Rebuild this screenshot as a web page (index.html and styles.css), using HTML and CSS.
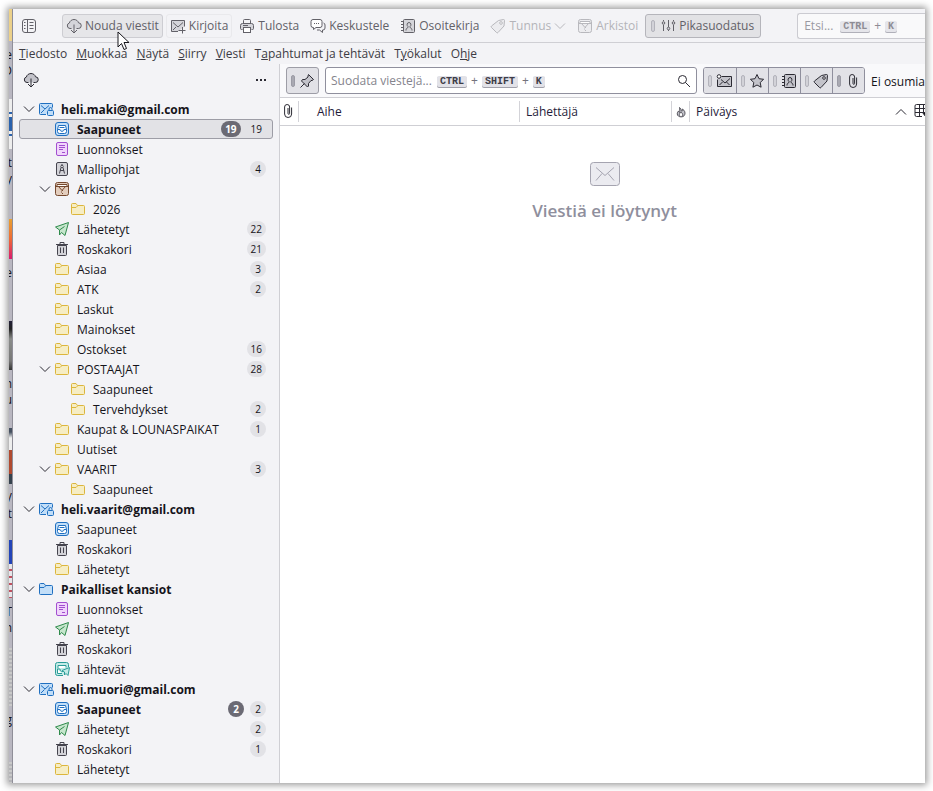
FILE: index.html
```html
<!DOCTYPE html>
<html lang="fi">
<head>
  <meta charset="UTF-8" />
  <meta name="viewport" content="width=device-width, initial-scale=1.0"/>
  <title>Saapuneet</title>
  <link rel="stylesheet" href="styles.css">
</head>
<body>

  <!-- Icon set -->
  <svg class="defs" aria-hidden="true">
    <symbol id="i-chevron" viewBox="0 0 12 12"><path fill="none" d="M1 3.5l5 5 5-5"/></symbol>
    <symbol id="i-panel" viewBox="0 0 16 16"><rect x="1.500" y="1.500" width="13" height="13" rx="2.500" fill="none"/><path fill="none" d="M6.500 1.500v13M8.500 4.500h4M8.500 7.500h4M8.500 10.500h4M3 4.500h1.500M3 7.500h1.500M3 10.500h1.500"/></symbol>
    <symbol id="i-cloud" viewBox="0 0 16 16"><path d="M5.500 10.500H4a2.800 2.800 0 0 1-.6-5.500C3.800 2.800 6 1.500 8 1.500c2.200 0 4 1.300 4.500 3.300a2.800 2.800 0 0 1-.2 5.700H10.500"/><path fill="none" d="M8 6.500v8.500M5 12l3 3 3-3"/></symbol>
    <symbol id="i-write" viewBox="0 0 16 16"><path d="M8 13.500H1.500v-11h13v6"/><path fill="none" d="M3 4.500l5 4.500 5-4.500M3 12l3-3M8.500 12.500h7M12.500 9v6.500"/></symbol>
    <symbol id="i-print" viewBox="0 0 16 16"><path d="M3.500 11.500h-1a1 1 0 0 1-1-1v-3a2 2 0 0 1 2-2h9a2 2 0 0 1 2 2v3a1 1 0 0 1-1 1h-1"/><path fill="none" d="M4.500 5.500v-3a1 1 0 0 1 1-1h5a1 1 0 0 1 1 1v3M4 7.500h5"/><rect x="4.500" y="9.500" width="7" height="5" fill="#fff"/></symbol>
    <symbol id="i-chat" viewBox="0 0 16 16"><path d="M3 1.500h7a2 2 0 0 1 2 2v4a2 2 0 0 1-2 2H6l-2.500 2v-2H3a2 2 0 0 1-2-2v-4a2 2 0 0 1 2-2z" fill="#fff"/><path fill="none" d="M13.500 5a2 2 0 0 1 1.500 2v3a2 2 0 0 1-2 2h-.500v2.500L9.500 12H7M4 5.500h1M6 5.500h1M8 5.500h1"/></symbol>
    <symbol id="i-book" viewBox="0 0 16 16"><rect x="3.500" y="1.500" width="11" height="13" rx="1"/><path fill="none" d="M1 3.500h2.500M1 6.500h2.500M1 9.500h2.500M1 12.500h2.500M6 12.500c0-2 1-2.500 2-3v-1c-1.500-1-1.200-4 1-4s2.500 3 1 4v1c1 .500 2 1 2 3"/></symbol>
    <symbol id="i-tag" viewBox="0 0 16 16"><path d="M8.500 2.500l5-1a1 1 0 0 1 1 1l-.500 5.500-6 6.500a1 1 0 0 1-1.500 0L1.500 9.500a1 1 0 0 1 0-1.500z"/><circle cx="11" cy="5" r="1.300" fill="#fff"/></symbol>
    <symbol id="i-archive" viewBox="0 0 16 16"><rect x="1.500" y="1.500" width="13" height="13" rx="2"/><path d="M3 3.500h10v2H3z" fill="#fff"/><path d="M1.500 5.500h13M4.500 5.500l3.500 4 3.500-4" fill="none"/><path fill="none" d="M8 9.500h1M7 11h1M8 12.500h1"/></symbol>
    <symbol id="i-sliders" viewBox="0 0 16 16"><path fill="none" d="M3.500 7v6M8.500 2v7M13.500 7v6M3.500 2v1M13.500 2v1M8.500 12v1"/><circle cx="3.500" cy="5" r="1.300"/><circle cx="8.500" cy="10.500" r="1.300"/><circle cx="13.500" cy="5" r="1.300"/></symbol>
    <symbol id="i-pin" viewBox="0 0 16 16"><path d="M9.500 1.500l5 5-1.500 1-1 0-2.500 3 0 2.500-1 1L2.500 8l1-1.500H6L9 4V3z"/><path fill="none" d="M5.500 10.500l-4 4"/></symbol>
    <symbol id="i-search" viewBox="0 0 16 16"><circle cx="6.500" cy="6.500" r="4" fill="none"/><path fill="none" d="M9.500 9.500l4.500 4.500"/></symbol>
    <symbol id="i-unread" viewBox="0 0 16 16"><path d="M5.500 3.500h10v10h-14v-7"/><path fill="none" d="M5 6.500l4 3.500 5-4.500M3.500 12l3-3M13.500 12l-3-3"/><circle cx="3" cy="3.500" r="1.800" fill="#fff"/></symbol>
    <symbol id="i-star" viewBox="0 0 16 16"><path d="M8 1.500l2 4.200 4.600.600-3.400 3.200.900 4.700L8 12l-4.100 2.200.900-4.700L1.400 6.300 6 5.700z"/></symbol>
    <symbol id="i-clip" viewBox="0 0 16 16"><path fill="none" d="M8 5v5.500a.8.800 0 0 0 1.600 0V4a2.500 2.500 0 0 0-5 0v7a3.500 3.500 0 0 0 7 0V4.500"/></symbol>
    <symbol id="i-flame" viewBox="0 0 16 16"><path d="M6 2c3 2 2 4 3 5 1-1 1-2 1-3 3 2 4 5 3 7.500s-3 3-5 3-5-1-5-4c0-2 1-3 2-4 0 1 0 2 1 2 1-2 0-4 0-6.500z"/><path d="M6 13c-1-2 1-4 2-5 1 1 3 3 2 5" fill="#fff"/></symbol>
    <symbol id="i-columns" viewBox="0 0 16 16"><path fill="none" d="M15 7.500V3a1.500 1.500 0 0 0-1.500-1.500h-10A1.500 1.500 0 0 0 2 3v9a1.500 1.500 0 0 0 1.500 1.500H9M2 5.500h13M2 9.500h8M6.500 2v11.500M10.500 2v7"/><path d="M9.500 9.500h6l-3 4z" fill="#15141a"/></symbol>
    <symbol id="i-account" viewBox="0 0 16 16"><path d="M8 13.500H2.500a1 1 0 0 1-1-1v-9a1 1 0 0 1 1-1h11a1 1 0 0 1 1 1v3"/><path fill="none" d="M3 4.500L7 8l4-3.500M3 12l3.500-3.500M11 9.500V8a1.500 1.500 0 0 1 3 0v1.500"/><rect x="9.500" y="9.500" width="6" height="5" rx="1"/></symbol>
    <symbol id="i-inbox" viewBox="0 0 16 16"><rect x="1.500" y="1.500" width="13" height="13" rx="2.500"/><path fill="#fff" d="M3.500 8.500l1-4h7l1 4v2a2 2 0 0 1-2 2h-5a2 2 0 0 1-2-2v-2H6c0 2.500 4 2.500 4 0h2.500"/><path fill="none" d="M5.500 6.500h5"/></symbol>
    <symbol id="i-draft" viewBox="0 0 16 16"><rect x="2.500" y="1.500" width="11" height="13" rx="1.500"/><path fill="none" d="M5 4.500h6M5 6.500h6M5 8.500h4M8 11.500h3"/></symbol>
    <symbol id="i-template" viewBox="0 0 16 16"><rect x="2.500" y="1.500" width="11" height="13" rx="1.500"/><path fill="none" d="M8 3v1.500M5.500 12.500l1.500-6M10.500 12.500L9 6.500M6 9.500h4"/><circle cx="8" cy="5.500" r="1.200" fill="#fff"/></symbol>
    <symbol id="i-folder" viewBox="0 0 16 16"><path d="M1.500 12.500v-9a1 1 0 0 1 1-1h3.500l1.500 2h6a1 1 0 0 1 1 1v7a1 1 0 0 1-1 1h-11a1 1 0 0 1-1-1z"/><path fill="none" d="M2 6.500h4l2-2"/></symbol>
    <symbol id="i-sent" viewBox="0 0 16 16"><path d="M14.500 1.500L1.500 6l4 3v5l2-2.500 3.500 3z"/><path fill="none" d="M5.500 9l5-3.500"/></symbol>
    <symbol id="i-trash" viewBox="0 0 16 16"><path d="M3.500 4.500h9v9a1 1 0 0 1-1 1h-7a1 1 0 0 1-1-1z"/><path fill="none" d="M2 3.500h12M6 3V1.500h4V3M6.500 6.500v5.500M9.500 6.500v5.500"/></symbol>
    <symbol id="i-outbox" viewBox="0 0 16 16"><path d="M9 14.500H3.500a2 2 0 0 1-2-2v-9a2 2 0 0 1 2-2h9a2 2 0 0 1 2 2V6"/><path fill="#fff" d="M12 6.500V4.500H4v3M3.500 8H6c0 2 1 2.500 3 2.500M3.500 8v4.500H8"/><path d="M15.500 6.500L8 9.500l2.500 1.500v3l1.500-1.500 2 2z"/></symbol>
    <symbol id="i-mail" viewBox="0 0 32 26"><rect x="1.500" y="1.500" width="29" height="23" rx="3"/><path fill="none" d="M7 6.500l9 8 9-8M7 19.500l6-7M25 19.500l-6-7"/></symbol>
  </svg>

  <div class="screen">
    <!-- Strip of the page behind the mail window -->
    <div class="behind" aria-hidden="true">
      <div class="strip yellow"></div>
      <div class="strip text h59"><span>e</span><span>D</span></div>
      <div class="strip logo"></div>
      <div class="strip text h70"><span>it</span><span>y</span></div>
      <div class="strip sunset"></div>
      <div class="strip text h62"><span>e</span></div>
      <div class="strip photo"></div>
      <div class="strip text h59"><span>n</span><span>u</span></div>
      <div class="strip badge"></div>
      <div class="strip text h56"><span>V</span><span>t</span></div>
      <div class="strip blue"></div>
      <div class="strip lines"></div>
      <div class="strip text h50"><span>T</span><span>n</span></div>
      <div class="strip paper"></div>
      <div class="strip text h56"><span>g</span></div>
      <div class="strip paper last"></div>
    </div>

    <div class="window">
      <div class="toolbar">
        <button class="spaces" aria-label="Työtilat"><svg class="icon"><use href="#i-panel"/></svg></button>
        <button class="tool hover"><svg class="icon"><use href="#i-cloud"/></svg>Nouda viestit</button>
        <button class="tool framed"><svg class="icon"><use href="#i-write"/></svg>Kirjoita</button>
        <button class="tool"><svg class="icon"><use href="#i-print"/></svg>Tulosta</button>
        <button class="tool"><svg class="icon"><use href="#i-chat"/></svg>Keskustele</button>
        <button class="tool"><svg class="icon"><use href="#i-book"/></svg>Osoitekirja</button>
        <button class="tool" disabled><svg class="icon"><use href="#i-tag"/></svg>Tunnus<svg class="arrow"><use href="#i-chevron"/></svg></button>
        <button class="tool" disabled><svg class="icon"><use href="#i-archive"/></svg>Arkistoi</button>
        <button class="tool pressed"><span class="bar"></span><svg class="icon"><use href="#i-sliders"/></svg>Pikasuodatus</button>
        <label class="search">
          <input type="text" placeholder="Etsi..." aria-label="Etsi">
          <span class="keys"><kbd>CTRL</kbd>+<kbd>K</kbd></span>
        </label>
      </div>

      <nav class="menubar">
        <a href="#"><u>T</u>iedosto</a>
        <a href="#"><u>M</u>uokkaa</a>
        <a href="#"><u>N</u>äytä</a>
        <a href="#"><u>S</u>iirry</a>
        <a href="#"><u>V</u>iesti</a>
        <a href="#">T<u>a</u>pahtumat ja tehtävät</a>
        <a href="#">T<u>y</u>ökalut</a>
        <a href="#">O<u>h</u>je</a>
      </nav>

      <div class="main">
        <aside class="folders">
          <div class="folder-header">
            <button aria-label="Nouda viestit"><svg class="icon"><use href="#i-cloud"/></svg></button>
            <button class="more" aria-label="Lisää"><i></i><i></i><i></i></button>
          </div>

          <ul class="tree">
            <li><a class="row account" href="#"><svg class="arrow"><use href="#i-chevron"/></svg><svg class="icon c-blue"><use href="#i-account"/></svg><span class="name">heli.maki@gmail.com</span></a>
              <ul>
                <li><a class="row unread selected" href="#"><svg class="icon c-blue"><use href="#i-inbox"/></svg><span class="name">Saapuneet</span><span class="count new">19</span><span class="count">19</span></a></li>
                <li><a class="row" href="#"><svg class="icon c-purple"><use href="#i-draft"/></svg><span class="name">Luonnokset</span></a></li>
                <li><a class="row" href="#"><svg class="icon c-grey"><use href="#i-template"/></svg><span class="name">Mallipohjat</span><span class="count">4</span></a></li>
                <li><a class="row" href="#"><svg class="arrow"><use href="#i-chevron"/></svg><svg class="icon c-brown"><use href="#i-archive"/></svg><span class="name">Arkisto</span></a>
                  <ul>
                    <li><a class="row" href="#"><svg class="icon c-yellow"><use href="#i-folder"/></svg><span class="name">2026</span></a></li>
                  </ul>
                </li>
                <li><a class="row" href="#"><svg class="icon c-green"><use href="#i-sent"/></svg><span class="name">Lähetetyt</span><span class="count">22</span></a></li>
                <li><a class="row" href="#"><svg class="icon c-grey"><use href="#i-trash"/></svg><span class="name">Roskakori</span><span class="count">21</span></a></li>
                <li><a class="row" href="#"><svg class="icon c-yellow"><use href="#i-folder"/></svg><span class="name">Asiaa</span><span class="count">3</span></a></li>
                <li><a class="row" href="#"><svg class="icon c-yellow"><use href="#i-folder"/></svg><span class="name">ATK</span><span class="count">2</span></a></li>
                <li><a class="row" href="#"><svg class="icon c-yellow"><use href="#i-folder"/></svg><span class="name">Laskut</span></a></li>
                <li><a class="row" href="#"><svg class="icon c-yellow"><use href="#i-folder"/></svg><span class="name">Mainokset</span></a></li>
                <li><a class="row" href="#"><svg class="icon c-yellow"><use href="#i-folder"/></svg><span class="name">Ostokset</span><span class="count">16</span></a></li>
                <li><a class="row" href="#"><svg class="arrow"><use href="#i-chevron"/></svg><svg class="icon c-yellow"><use href="#i-folder"/></svg><span class="name">POSTAAJAT</span><span class="count">28</span></a>
                  <ul>
                    <li><a class="row" href="#"><svg class="icon c-yellow"><use href="#i-folder"/></svg><span class="name">Saapuneet</span></a></li>
                    <li><a class="row" href="#"><svg class="icon c-yellow"><use href="#i-folder"/></svg><span class="name">Tervehdykset</span><span class="count">2</span></a></li>
                  </ul>
                </li>
                <li><a class="row" href="#"><svg class="icon c-yellow"><use href="#i-folder"/></svg><span class="name">Kaupat &amp; LOUNASPAIKAT</span><span class="count">1</span></a></li>
                <li><a class="row" href="#"><svg class="icon c-yellow"><use href="#i-folder"/></svg><span class="name">Uutiset</span></a></li>
                <li><a class="row" href="#"><svg class="arrow"><use href="#i-chevron"/></svg><svg class="icon c-yellow"><use href="#i-folder"/></svg><span class="name">VAARIT</span><span class="count">3</span></a>
                  <ul>
                    <li><a class="row" href="#"><svg class="icon c-yellow"><use href="#i-folder"/></svg><span class="name">Saapuneet</span></a></li>
                  </ul>
                </li>
              </ul>
            </li>
            <li><a class="row account" href="#"><svg class="arrow"><use href="#i-chevron"/></svg><svg class="icon c-blue"><use href="#i-account"/></svg><span class="name">heli.vaarit@gmail.com</span></a>
              <ul>
                <li><a class="row" href="#"><svg class="icon c-blue"><use href="#i-inbox"/></svg><span class="name">Saapuneet</span></a></li>
                <li><a class="row" href="#"><svg class="icon c-grey"><use href="#i-trash"/></svg><span class="name">Roskakori</span></a></li>
                <li><a class="row" href="#"><svg class="icon c-yellow"><use href="#i-folder"/></svg><span class="name">Lähetetyt</span></a></li>
              </ul>
            </li>
            <li><a class="row account" href="#"><svg class="arrow"><use href="#i-chevron"/></svg><svg class="icon c-blue"><use href="#i-folder"/></svg><span class="name">Paikalliset kansiot</span></a>
              <ul>
                <li><a class="row" href="#"><svg class="icon c-purple"><use href="#i-draft"/></svg><span class="name">Luonnokset</span></a></li>
                <li><a class="row" href="#"><svg class="icon c-green"><use href="#i-sent"/></svg><span class="name">Lähetetyt</span></a></li>
                <li><a class="row" href="#"><svg class="icon c-grey"><use href="#i-trash"/></svg><span class="name">Roskakori</span></a></li>
                <li><a class="row" href="#"><svg class="icon c-teal"><use href="#i-outbox"/></svg><span class="name">Lähtevät</span></a></li>
              </ul>
            </li>
            <li><a class="row account" href="#"><svg class="arrow"><use href="#i-chevron"/></svg><svg class="icon c-blue"><use href="#i-account"/></svg><span class="name">heli.muori@gmail.com</span></a>
              <ul>
                <li><a class="row unread" href="#"><svg class="icon c-blue"><use href="#i-inbox"/></svg><span class="name">Saapuneet</span><span class="count new">2</span><span class="count">2</span></a></li>
                <li><a class="row" href="#"><svg class="icon c-green"><use href="#i-sent"/></svg><span class="name">Lähetetyt</span><span class="count">2</span></a></li>
                <li><a class="row" href="#"><svg class="icon c-grey"><use href="#i-trash"/></svg><span class="name">Roskakori</span><span class="count">1</span></a></li>
                <li><a class="row" href="#"><svg class="icon c-yellow"><use href="#i-folder"/></svg><span class="name">Lähetetyt</span></a></li>
              </ul>
            </li>
          </ul>
        </aside>

        <section class="messages">
          <div class="filter-bar">
            <button class="filter pin" aria-label="Pidä suodatin"><span class="bar dark"></span><svg class="icon"><use href="#i-pin"/></svg></button>
            <label class="filter-search">
              <input type="text" placeholder="Suodata viestejä..." aria-label="Suodata viestejä">
              <span class="keys"><kbd>CTRL</kbd>+<kbd>SHIFT</kbd>+<kbd>K</kbd></span>
              <svg class="icon"><use href="#i-search"/></svg>
            </label>
            <div class="filter-group">
              <button class="filter" aria-label="Lukemattomat"><span class="bar"></span><svg class="icon"><use href="#i-unread"/></svg></button>
              <button class="filter" aria-label="Tähdellä merkityt"><span class="bar"></span><svg class="icon"><use href="#i-star"/></svg></button>
              <button class="filter" aria-label="Yhteystiedot"><span class="bar"></span><svg class="icon"><use href="#i-book"/></svg></button>
              <button class="filter" aria-label="Tunnukset"><span class="bar"></span><svg class="icon"><use href="#i-tag"/></svg></button>
              <button class="filter" aria-label="Liitteet"><span class="bar dark"></span><svg class="icon"><use href="#i-clip"/></svg></button>
            </div>
            <span class="result">Ei osumia</span>
          </div>

          <table class="thread">
            <thead>
              <tr>
                <th class="col-icon"><svg class="icon"><use href="#i-clip"/></svg></th>
                <th class="col-subject"><span>Aihe</span></th>
                <th class="col-from"><span>Lähettäjä</span></th>
                <th class="col-icon"><span><svg class="icon small"><use href="#i-flame"/></svg></span></th>
                <th class="col-date"><span>Päiväys<svg class="arrow up"><use href="#i-chevron"/></svg></span></th>
                <th class="col-pick"><svg class="icon"><use href="#i-columns"/></svg></th>
              </tr>
            </thead>
          </table>

          <div class="empty">
            <svg class="mail"><use href="#i-mail"/></svg>
            <p>Viestiä ei löytynyt</p>
          </div>
        </section>
      </div>
    </div>
  </div>

  <svg class="cursor" viewBox="0 0 14 20" aria-hidden="true"><path d="M1 1v15l3.500-3.500L7 18.500l2.500-1L7 11.500h5z"/></svg>

</body>
</html>
```
FILE: styles.css
```css
* {
  box-sizing: border-box;
}

body {
  margin: 0;
  min-height: 100vh;
  padding: 9px 8px 8px 9px;
  background: #fff;
  font-family: "Open Sans", "Noto Sans", sans-serif;
  font-size: 12px;
  line-height: 16px;
  color: #15141a;
  display: flex;
}

button, input {
  font: inherit;
  color: inherit;
}

button {
  border: 0;
  padding: 0;
  background: none;
}

a {
  color: inherit;
  text-decoration: none;
}

ul {
  list-style: none;
  margin: 0;
  padding: 0;
}

.defs {
  position: absolute;
  width: 0;
  height: 0;
}

.icon {
  width: 16px;
  height: 16px;
  flex: none;
  stroke: #2b2a33;
  fill: #c3c3ca;
}

.arrow {
  width: 12px;
  height: 12px;
  flex: none;
  stroke: #2b2a33;
}

.screen {
  flex: 1;
  min-width: 0;
  display: flex;
  overflow: hidden;
  box-shadow: 0 0 7px 2px rgba(0,0,0,0.4);
}

/* page behind */
.behind {
  width: 4px;
  flex: none;
  overflow: hidden;
  background: #b9b7c1;
  border-right: 1px solid #8f8e98;
}

.strip.text {
  display: flex;
  flex-direction: column;
  align-items: flex-end;
  padding-top: 6px;
}

.h50 { height: 50px; }
.h56 { height: 56px; }
.h59 { height: 58px; }
.h62 { height: 62px; }
.h70 { height: 70px; }

.yellow { height: 32px; background: #ecd18a; }
.logo { height: 50px; background: linear-gradient(#eee 13px, #2a62ad 13px 15px, #eee 15px 18px, #2a62ad 18px 32px, #eee 32px 35px, #2a62ad 35px 37px, #eee 37px); }
.sunset { height: 40px; background: linear-gradient(#e8a030, #ef6a35, #d81b70); }
.photo { height: 49px; background: linear-gradient(#222038, #222 8px, #8a8c8a 18px, #777 40px, #333); }
.badge { height: 56px; background: linear-gradient(#455060 4px, #eee 10px 22px, #b04a30 22px 46px, #36424e 46px); }
.blue { height: 24px; background: #2344b8; }
.lines { height: 34px; background: repeating-linear-gradient(#e6e6ea 0 5px, #c05060 5px 7px); }
.paper { height: 58px; background: repeating-linear-gradient(#c9c9c9 0 2px, #b4b4b8 2px 4px); }
.paper.last { height: 21px; }

.window {
  flex: 1;
  min-width: 0;
  display: flex;
  flex-direction: column;
  background: #f3f3f6;
}

/* toolbar */
.toolbar {
  display: flex;
  align-items: center;
  gap: 3px;
  height: 34px;
  padding-left: 8px;
  border-bottom: 1px solid #cfcfd4;
  color: #626168;
}

.toolbar .icon,
.toolbar .arrow {
  stroke: #626168;
  fill: #d5d5da;
}

.spaces {
  width: 16px;
  height: 16px;
  margin-right: 22px;
}

.tool {
  display: flex;
  align-items: center;
  gap: 3px;
  height: 24px;
  padding: 0 3px;
  border: 1px solid transparent;
  border-radius: 3px;
  white-space: nowrap;
}

.tool.hover {
  background: #e6e6e9;
  border-color: #cdcdd2;
}

.tool.framed {
  border-color: #e9e9ec;
}

.tool:disabled {
  color: #b4b4b9;
}

.tool:disabled .icon,
.tool:disabled .arrow {
  stroke: #b8b8bd;
  fill: #ececef;
}

.tool.pressed {
  background: #e2e2e5;
  border-color: #b5b5bb;
  padding: 0 6px 0 5px;
}

.bar {
  width: 4px;
  height: 12px;
  flex: none;
  border: 1px solid #b3b3bb;
  border-radius: 2px;
  background: #d2d2d8;
}

.bar.dark {
  background: #a9a9b2;
  border-color: #9b9ba5;
}

.pressed .bar {
  margin-right: 2px;
}

.search {
  flex: 1;
  min-width: 0;
  display: flex;
  align-items: center;
  height: 26px;
  margin-left: 33px;
  padding-left: 6px;
  overflow: hidden;
  background: #fbfbfc;
  border: 1px solid #c2c2c8;
  border-right: 0;
  border-radius: 3px 0 0 3px;
  opacity: 0.8;
}

.search input,
.filter-search input {
  border: 0;
  padding: 0;
  outline: none;
  background: none;
}

.search input { width: 36px; }
.filter-search input { width: 106px; }

input::placeholder {
  color: #85848d;
  opacity: 1;
}

.keys {
  display: flex;
  align-items: center;
  gap: 4px;
  color: #74737c;
}

.keys kbd {
  margin-top: 2px;
  padding: 0 3px;
  font-family: "Liberation Mono", monospace;
  font-size: 10px;
  font-weight: bold;
  line-height: 11px;
  color: #3d3c47;
  background: #e2e2e8;
  border-radius: 2px;
  box-shadow: 0 1px 0 #a0a0aa;
}

.search kbd {
  color: #74737c;
}

/* menu */
.menubar {
  display: flex;
  align-items: center;
  gap: 9px;
  height: 21px;
  padding-left: 6px;
  color: #3d3c44;
  white-space: nowrap;
}

.main {
  flex: 1;
  display: flex;
}

/* folder pane */
.folders {
  width: 267px;
  flex: none;
  border-right: 1px solid #cfcfd4;
}

.folder-header {
  display: flex;
  align-items: center;
  justify-content: space-between;
  height: 32px;
  padding: 0 13px 0 10px;
  margin-bottom: 3px;
}

.folder-header button {
  display: flex;
}

.folder-header .more {
  gap: 2px;
}

.more i {
  width: 2px;
  height: 2px;
  background: #2b2a33;
}

.tree {
  padding: 0 6px;
}

.row {
  display: flex;
  align-items: center;
  height: 20px;
  padding: 0 6px 0 34px;
  border: 1px solid transparent;
  border-radius: 3px;
}

.row > .arrow {
  margin: 0 3px 0 -15px;
}

.account {
  padding-left: 18px;
}

.tree ul ul .row {
  padding-left: 50px;
}

.name {
  flex: 1;
  margin-left: 7px;
  padding-top: 2px;
  white-space: nowrap;
}

.account .name,
.unread .name {
  font-weight: bold;
}

.selected {
  background: #e2e2e6;
  border-color: #9d9da6;
}

.count {
  min-width: 16px;
  height: 16px;
  padding: 0 4px;
  margin-left: 6px;
  border-radius: 8px;
  background: #e2e2e6;
  font-size: 10px;
  text-align: center;
}

.count.new {
  background: #6b6a74;
  color: #fff;
  font-weight: bold;
}

.c-blue { stroke: #1f6fc0; fill: #c2def8; }
.c-purple { stroke: #a24fd0; fill: #f0d5fb; }
.c-grey { stroke: #45444e; fill: #d3d3d8; }
.c-brown { stroke: #75492f; fill: #e3cdbd; }
.c-yellow { stroke: #dcb63c; fill: #f6edc4; }
.c-green { stroke: #2f8a4c; fill: #c6e6cd; }
.c-teal { stroke: #2a9c98; fill: #c3ebe7; }

/* messages */
.messages {
  flex: 1;
  min-width: 0;
  background: #fff;
}

.filter-bar {
  display: flex;
  align-items: center;
  gap: 6px;
  height: 34px;
  padding-left: 6px;
  background: #f9f9fb;
  border-bottom: 1px solid #cfcfd4;
}

.filter {
  display: flex;
  align-items: center;
  justify-content: center;
  gap: 4px;
  width: 32px;
  height: 25px;
  background: #e2e2e7;
}

.filter.pin {
  width: 33px;
  height: 27px;
  border: 1px solid #9d9da6;
  border-radius: 3px;
}

.filter-search {
  flex: 1;
  min-width: 0;
  display: flex;
  align-items: center;
  height: 27px;
  padding: 0 4px 0 5px;
  background: #fff;
  border: 1px solid #8f8f9d;
  border-radius: 3px;
}

.filter-search .icon {
  margin-left: auto;
}

.filter-group {
  display: flex;
  border: 1px solid #8f8f9d;
  border-radius: 3px;
  overflow: hidden;
}

.filter-group .filter + .filter {
  border-left: 1px solid #8f8f9d;
}

.result {
  padding-top: 2px;
  white-space: nowrap;
}

.thread {
  width: 100%;
  table-layout: fixed;
  border-collapse: collapse;
  border-bottom: 1px solid #cfcfd4;
}

th {
  height: 27px;
  padding: 0;
  font-weight: normal;
  text-align: left;
  color: #1f1b3a;
}

th > span {
  display: flex;
  align-items: center;
  height: 21px;
  padding-top: 2px;
  padding-left: 6px;
  border-left: 1px solid #d3d3d8;
}

th > .icon {
  display: block;
}

th .icon.small {
  width: 12px;
  height: 12px;
}

th .arrow {
  margin-left: auto;
}

.arrow.up {
  transform: rotate(180deg);
}

.col-icon { width: 18px; }
.col-icon > span { padding-left: 3px; }
.col-subject > span { padding-left: 18px; }
.col-from { width: 152px; }
.col-subject { width: 221px; }
.col-pick { width: 12px; overflow: hidden; }
.col-date > span { margin-right: 6px; }

.empty {
  display: flex;
  flex-direction: column;
  align-items: center;
  padding: 35px 0 0 4px;
  color: #8f8f9d;
}

.mail {
  width: 32px;
  height: 26px;
  stroke: #a5a4b0;
  fill: #ebebf0;
}

.empty p {
  margin: 12px 0 0;
  font-size: 17px;
  line-height: 24px;
  font-weight: 600;
}

.cursor {
  position: absolute;
  left: 117px;
  top: 31px;
  width: 14px;
  height: 20px;
  fill: #fff;
  stroke: #15141a;
}
```
